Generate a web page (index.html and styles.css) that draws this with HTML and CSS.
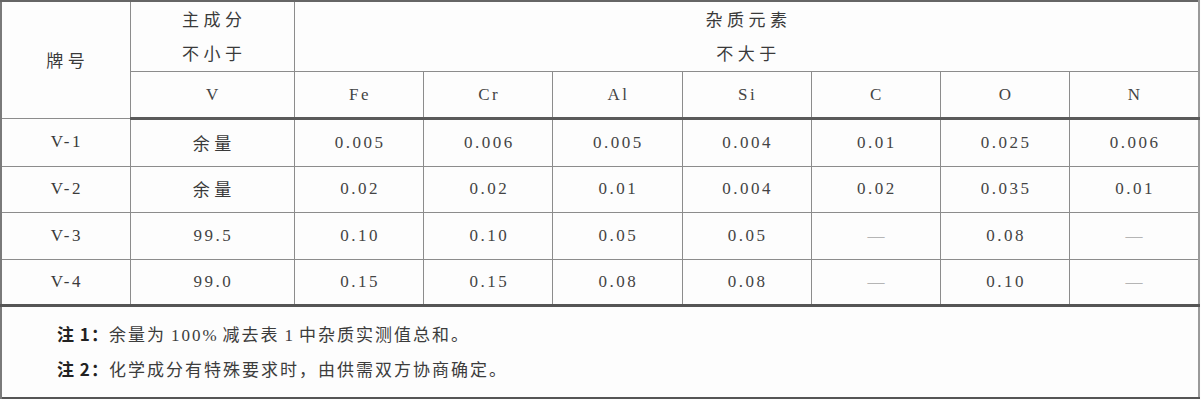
FILE: index.html
```html
<!DOCTYPE html>
<html lang="zh">
<head>
<meta charset="utf-8">
<title>钒化学成分</title>
<link rel="stylesheet" href="styles.css">
</head>
<body>
<table class="spec">
  <colgroup>
    <col class="c-grade">
    <col class="c-main">
    <col class="c-el"><col class="c-el"><col class="c-el"><col class="c-el"><col class="c-el"><col class="c-el"><col class="c-el">
  </colgroup>
  <thead>
    <tr class="h1">
      <th rowspan="2" class="cjk">牌号</th>
      <th class="cjk two">主成分<br>不小于</th>
      <th colspan="7" class="cjk two">杂质元素<br>不大于</th>
    </tr>
    <tr class="h2">
      <th>V</th>
      <th>Fe</th><th>Cr</th><th>Al</th><th>Si</th><th>C</th><th>O</th><th>N</th>
    </tr>
  </thead>
  <tbody>
    <tr class="r">
      <td class="lab">V-1</td><td class="cjk">余量</td>
      <td>0.005</td><td>0.006</td><td>0.005</td><td>0.004</td><td>0.01</td><td>0.025</td><td>0.006</td>
    </tr>
    <tr class="r">
      <td class="lab">V-2</td><td class="cjk">余量</td>
      <td>0.02</td><td>0.02</td><td>0.01</td><td>0.004</td><td>0.02</td><td>0.035</td><td>0.01</td>
    </tr>
    <tr class="r">
      <td class="lab">V-3</td><td>99.5</td>
      <td>0.10</td><td>0.10</td><td>0.05</td><td>0.05</td><td class="dash">—</td><td>0.08</td><td class="dash">—</td>
    </tr>
    <tr class="r last">
      <td class="lab">V-4</td><td>99.0</td>
      <td>0.15</td><td>0.15</td><td>0.08</td><td>0.08</td><td class="dash">—</td><td>0.10</td><td class="dash">—</td>
    </tr>
  </tbody>
  <tfoot>
    <tr class="notes">
      <td colspan="9">
        <p class="note"><span class="tag">注 1：</span>余量为<span class="num">100%</span>减去表<span class="num">1</span>中杂质实测值总和。</p>
        <p class="note"><span class="tag">注 2：</span>化学成分有特殊要求时，由供需双方协商确定。</p>
      </td>
    </tr>
  </tfoot>
</table>
</body>
</html>
```

FILE: styles.css
```css
html, body {
  margin: 0;
  padding: 0;
  background: #fdfdfd;
}

.spec {
  width: 1200px;
  border-collapse: collapse;
  table-layout: fixed;
  font-family: "Liberation Serif", "Noto Sans CJK SC", serif;
  color: #444;
  font-size: 17px;
  border-top: 2px solid #666;
  border-left: 2px solid #7a7a7a;
  border-right: 2px solid #9a9a9a;
  border-bottom: 2px solid #555;
}

.c-grade { width: 129px; }
.c-main { width: 164px; }
.c-el { width: 129px; }

.spec th,
.spec td {
  border: 1px solid #8c8c8c;
  padding: 0 0 0 2px;
  text-align: center;
  vertical-align: middle;
  font-weight: 400;
  letter-spacing: 2.5px;
  line-height: 20px;
}

.spec .cjk {
  font-family: "Noto Sans CJK SC", sans-serif;
  letter-spacing: 4.5px;
  padding-left: 4px;
  color: #3a3a3a;
  font-size: 17px;
}

.h1 th { height: 65px; }
.spec .h1 .two { line-height: 34px; padding-top: 0; padding-bottom: 1px; }
.h2 th { height: 45px; border-bottom: 3px solid #5a5a5a; }

.r td { height: 45.5px; }
.r.last td { height: 44px; border-bottom: 3px solid #555; }

.lab { color: #3a3a3a; }

.spec .dash {
  color: #b5b5b5;
  letter-spacing: 0;
  padding-left: 0;
}

.spec .notes td {
  height: 90px;
  text-align: left;
  padding-left: 55px;
  border-left: 2px solid #7a7a7a;
  letter-spacing: 0;
}

.note {
  margin: 0;
  line-height: 33px;
  font-family: "Liberation Serif", "Noto Sans CJK SC", serif;
  font-size: 17px;
  letter-spacing: 2px;
  color: #3c3c3c;
}

.num {
  margin: 0 4px 0 5px;
}

.tag {
  font-family: "Noto Sans CJK SC", sans-serif;
  font-weight: 700;
  color: #222;
  letter-spacing: 1px;
}
```
